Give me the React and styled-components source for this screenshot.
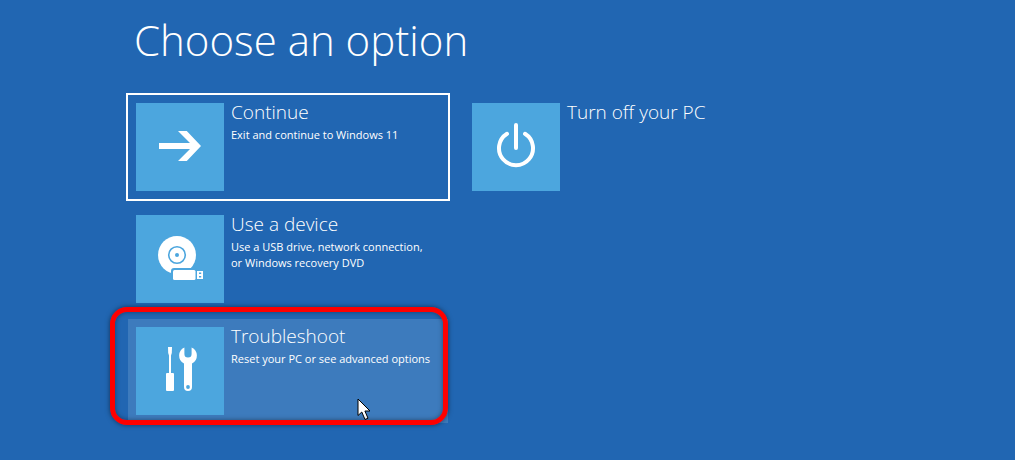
import React from 'react';
import styled, { createGlobalStyle } from 'styled-components';

const ContinueIcon = () => (
    <svg width="88" height="88" viewBox="0 0 88 88" aria-hidden="true">
        <path fill="#fff" d="M23 40H54L42 28H50.8L65 43L50.8 58H42L54 46H23Z" />
    </svg>
);

const PowerIcon = () => (
    <svg width="88" height="88" viewBox="0 0 88 88" aria-hidden="true">
        <g fill="none" stroke="#fff" strokeWidth="4" strokeLinecap="round">
            <path d="M35 30.8A17 17 0 1 0 53 30.8" />
            <path d="M44 22V45" />
        </g>
    </svg>
);

const DeviceIcon = () => (
    <svg width="88" height="88" viewBox="0 0 88 88" aria-hidden="true">
        <circle cx="41" cy="40" r="19" fill="#fff" />
        <circle cx="41" cy="40" r="8.3" fill="none" stroke="#4ca6de" strokeWidth="1.6" />
        <circle cx="41" cy="40" r="2" fill="#4ca6de" />
        <rect x="35" y="53" width="26" height="14" rx="3" fill="#4ca6de" />
        <rect x="37" y="55" width="22.5" height="10" rx="1.5" fill="#fff" />
        <path fill="#fff" d="M61 56H67V64H61Z" />
        <path fill="#4ca6de" d="M63 57.6H65.2V59H63ZM63 61H65.2V62.4H63Z" />
    </svg>
);

const ToolsIcon = () => (
    <svg width="88" height="88" viewBox="0 0 88 88" aria-hidden="true">
        <g fill="#fff">
            <path d="M32 20H36L35.8 26L35 28.5V46H37Q38 46 38 47V63Q38 64 37 64H31Q30 64 30 63V47Q30 46 31 46H33V28.5L32.2 26Z" />
            <path d="M48.4 20.4V27Q48.4 30.6 52 30.6Q55.6 30.6 55.6 27V20.4A9 9 0 0 1 56 36.6V60A4 4 0 0 1 48 60V36.6A9 9 0 0 1 48.4 20.4Z" />
        </g>
        <circle cx="52" cy="60" r="1.9" fill="#4ca6de" />
    </svg>
);

const App = () => {
    return (
        <>
            <GlobalStyle />
            <Page>
                <Heading>Choose an option</Heading>
                <Options>
                    <Column>
                        <Option $focused>
                            <Tile><ContinueIcon /></Tile>
                            <Label>
                                <Name>Continue</Name>
                                <Description>Exit and continue to Windows 11</Description>
                            </Label>
                        </Option>
                        <Option>
                            <Tile><DeviceIcon /></Tile>
                            <Label>
                                <Name>Use a device</Name>
                                <Description>Use a USB drive, network connection,<br />or Windows recovery DVD</Description>
                            </Label>
                        </Option>
                        <Option $hovered>
                            <Tile><ToolsIcon /></Tile>
                            <Label>
                                <Name>Troubleshoot</Name>
                                <Description>Reset your PC or see advanced options</Description>
                            </Label>
                            <Pointer width="16" height="24" viewBox="0 0 16 24" aria-hidden="true">
                                <path fill="#fff" stroke="#000" d="M1 1V17.5L4.8 14L8 21.5L11 20.2L7.9 13H13Z" />
                            </Pointer>
                            <Marker />
                        </Option>
                    </Column>
                    <Column>
                        <Option>
                            <Tile><PowerIcon /></Tile>
                            <Label>
                                <Name>Turn off your PC</Name>
                            </Label>
                        </Option>
                    </Column>
                </Options>
            </Page>
        </>
    )
};

const GlobalStyle = createGlobalStyle`
    *{
        box-sizing: border-box;
    }
    body{
        margin: 0;
        background: #2166b2;
        color: #fff;
        font-family: "Open Sans", "Noto Sans", sans-serif;
    }
`;

const Page = styled.main`
    padding: 8px 16px 32px 128px;
`;

const Heading = styled.h1`
    margin: 0 0 23px;
    padding-left: 6px;
    font-size: 42px;
    font-weight: 300;
    line-height: 64px;
`;

const Options = styled.div`
    display: grid;
    grid-template-columns: repeat(2, minmax(0, 320px));
    gap: 16px;
`;

const Column = styled.div`
    display: flex;
    flex-direction: column;
    gap: 8px;
`;

const Option = styled.button`
    position: relative;
    display: flex;
    align-items: flex-start;
    gap: 7px;
    padding: 8px;
    border: none;
    outline: ${({ $focused }) => ($focused ? '2px solid #fff' : 'none')};
    background: ${({ $hovered }) => ($hovered ? '#3d7bbd' : 'transparent')};
    color: inherit;
    font-family: inherit;
    text-align: left;
    cursor: pointer;
`;

const Tile = styled.span`
    flex: none;
    display: flex;
    background: #4ca6de;
`;

const Label = styled.span`
    display: flex;
    flex-direction: column;
    min-width: 0;
`;

const Name = styled.span`
    font-size: 19px;
    font-weight: 300;
    line-height: 18px;
    margin-bottom: 6px;
`;

const Description = styled.span`
    font-size: 11px;
    line-height: 16px;
`;

const Pointer = styled.svg`
    position: absolute;
    left: 229px;
    top: 79px;
`;

//Red frame drawn over the option and the pointer
const Marker = styled.span`
    position: absolute;
    top: -12px;
    right: 0;
    bottom: -2px;
    left: -18px;
    border: 5px solid #fe0000;
    border-radius: 17px;
    box-shadow: 0 0 5px rgba(0,0,0,.5), inset 0 0 5px rgba(0,0,0,.4);
    pointer-events: none;
`;

export default App
